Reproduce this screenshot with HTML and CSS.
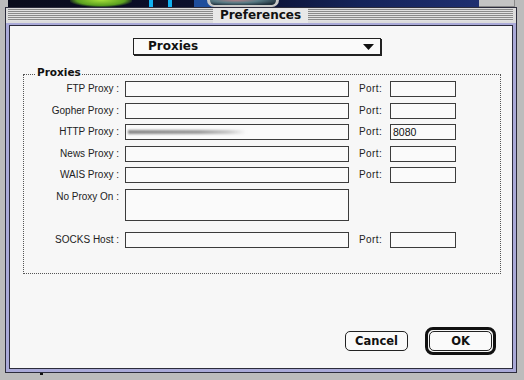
FILE: index.html
```html
<!DOCTYPE html>
<html>
<head>
<meta charset="utf-8">
<link rel="stylesheet" href="styles.css">
</head>
<body>
<div class="desk">
  <div class="desk-pic"><span class="blob-green"></span><span class="bar-a"></span><span class="bar-b"></span><span class="blob-blue"></span><span class="ring"></span></div>
  <div class="desk-gray"></div>
</div>
<div class="window">
  <div class="titlebar">
    <div class="stripes"></div>
    <div class="title">Preferences</div>
    <div class="stripes"></div>
  </div>
  <div class="content">
    <div class="popup">
      <span class="popup-label">Proxies</span>
      <svg class="popup-arrow" width="11" height="6" viewBox="0 0 11 6"><path d="M0 0H11L5.5 6Z" fill="#111"/></svg>
    </div>
    <fieldset class="group">
      <legend class="group-title">Proxies</legend>
      <div class="grid">
        <div class="lbl">FTP Proxy :</div><div class="field"></div><div class="plbl">Port:</div><div class="field"></div>
        <div class="lbl">Gopher Proxy :</div><div class="field"></div><div class="plbl">Port:</div><div class="field"></div>
        <div class="lbl">HTTP Proxy :</div><div class="field"><span class="smudge"></span></div><div class="plbl">Port:</div><div class="field">8080</div>
        <div class="lbl">News Proxy :</div><div class="field"></div><div class="plbl">Port:</div><div class="field"></div>
        <div class="lbl">WAIS Proxy :</div><div class="field"></div><div class="plbl">Port:</div><div class="field"></div>
        <div class="lbl lbl-top">No Proxy On :</div><div class="field field-tall"></div><div></div><div></div>
        <div class="lbl socks">SOCKS Host :</div><div class="field socks"></div><div class="plbl socks">Port:</div><div class="field socks"></div>
      </div>
    </fieldset>
    <div class="buttons">
      <div class="btn">Cancel</div>
      <div class="default-ring"><div class="btn">OK</div></div>
    </div>
  </div>
</div>
<div class="mark"></div>
</body>
</html>
```
FILE: styles.css
```css
html, body {
  margin: 0;
  padding: 0;
}
body {
  width: 524px;
  height: 380px;
  overflow: hidden;
  background: #bcbcbc;
  font-family: "DejaVu Sans", sans-serif;
  color: #111;
}
.desk {
  display: flex;
  height: 7px;
}
.desk-pic {
  position: relative;
  margin-left: 8px;
  width: 471px;
  height: 7px;
  background: linear-gradient(to right, #0a0c1c 0%, #0b1030 50%, #15245a 75%, #1f2f70 100%);
  overflow: hidden;
}
.desk-pic span {
  position: absolute;
  top: 0;
  height: 7px;
}
.blob-green {
  left: 62px;
  width: 62px;
  background: radial-gradient(ellipse at 50% 0%, #a6e03a 0%, #5aa020 55%, transparent 75%);
}
.bar-a { left: 141px; width: 4px; background: #10b0f0; }
.bar-b { left: 160px; width: 4px; background: #10b0f0; }
.blob-blue { left: 186px; width: 24px; background: #1e4d9c; }
.ring {
  left: 199px;
  width: 72px;
  border-left: 3px solid #c8c8c8;
  border-right: 3px solid #c8c8c8;
  border-bottom: 2px solid #c8c8c8;
  border-radius: 0 0 36px 36px;
  box-sizing: border-box;
  background: radial-gradient(ellipse at 40% 0%, #b07f86 0%, #5a7c86 40%, #20303c 80%);
}
.desk-gray {
  flex: 1;
  height: 6px;
  background: #c4c4c4;
  border-bottom: 1px solid #8a8a8a;
  border-right: 1px solid #8a8a8a;
  margin-right: 9px;
}
.window {
  margin-left: 5px;
  width: 512px;
  box-sizing: border-box;
  border: 1px solid #2c2c3c;
  background: #aaaad8;
  padding: 0 3px 3px;
}
.titlebar {
  display: flex;
  align-items: stretch;
  height: 15px;
  margin: 0 -3px 2px;
  padding: 0 3px 0 2px;
  background: #dcdcdc;
}
.stripes {
  flex: 1;
  margin: 1px 0 2px;
  background: repeating-linear-gradient(to bottom, #8a8a8a 0 1px, #e2e2e2 1px 2px);
}
.title {
  padding: 0 7px;
  background: #e8e8e8;
  font-weight: bold;
  font-size: 12px;
  line-height: 15px;
  color: #111;
}
.content {
  height: 342px;
  border: 1px solid #2c2c3c;
  background: #f7f7f7;
  display: flex;
  flex-direction: column;
}
.popup {
  margin: 12px 0 0 123px;
  width: 248px;
  height: 17px;
  box-sizing: border-box;
  border: 1px solid #222;
  box-shadow: 1px 1px 0 #222;
  background: #fafafa;
  display: flex;
  align-items: center;
  padding: 0 6px 0 14px;
}
.popup-label {
  flex: 1;
  font-weight: bold;
  font-size: 12px;
  line-height: 15px;
}
.popup-arrow {
  display: block;
}
.group {
  margin: 11px 0 0 13px;
  padding: 0 0 25px 0;
  width: 478px;
  box-sizing: border-box;
  border: 1px dotted #555;
  min-width: 0;
}
.group-title {
  margin-left: 12px;
  padding: 0 1px 5px;
  font-weight: bold;
  font-size: 10.5px;
  line-height: 12px;
}
.grid {
  margin-top: -2px;
  display: grid;
  grid-template-columns: 101px 234px 31px 66px;
  grid-template-rows: repeat(5, 16px) 32px 21px;
  row-gap: 5.6px;
  align-items: center;
  font-family: "Liberation Sans", sans-serif;
  font-size: 10px;
  line-height: 12px;
  color: #222;
}
.lbl {
  text-align: right;
  padding-right: 6px;
  white-space: nowrap;
}
.lbl-top {
  align-self: start;
  padding-top: 2px;
}
.plbl {
  white-space: nowrap;
  letter-spacing: 0.4px;
}
.field {
  height: 16px;
  box-sizing: border-box;
  border: 1px solid #3c3c3c;
  background: #fafafa;
  display: flex;
  align-items: center;
  padding-left: 2px;
  font-size: 10.5px;
  color: #111;
}
.grid > .field:nth-child(4n+2) {
  width: 224px;
}
.field-tall {
  height: 32px;
}
.socks {
  align-self: end;
}
.lbl.socks, .plbl.socks {
  margin-bottom: 2px;
}
.smudge {
  width: 118px;
  height: 4px;
  background: linear-gradient(to right, #888 0%, #9a9a9a 60%, #c8c8c8 85%, rgba(240,240,240,0) 100%);
  filter: blur(1px);
}
.buttons {
  margin-top: 53px;
  display: flex;
  justify-content: flex-end;
  align-items: center;
  gap: 17px;
  padding-right: 16px;
}
.btn {
  width: 63px;
  height: 20px;
  box-sizing: border-box;
  border: 1px solid #222;
  border-radius: 5px;
  background: #fafafa;
  font-weight: bold;
  font-size: 11.5px;
  line-height: 18px;
  text-align: center;
}
.default-ring {
  border: 3px solid #111;
  border-radius: 8px;
  padding: 1px;
  background: #f7f7f7;
}
.mark {
  margin: 0 0 0 40px;
  width: 3px;
  height: 2px;
  background: #111;
}
```
